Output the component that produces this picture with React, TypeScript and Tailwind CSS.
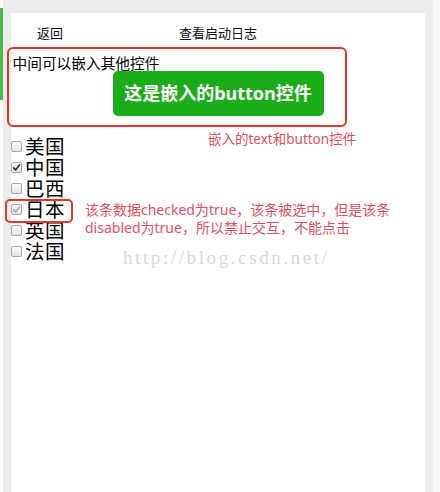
import React from "react";

const cjk = { fontFamily: '"Noto Sans", "Noto Sans CJK SC", sans-serif' };

function Box({ checked, disabled }: { checked?: boolean; disabled?: boolean }) {
  return (
    <span className="flex h-[11px] w-[11px] items-center justify-center rounded-[2px] border border-[#a8a8a8] bg-gradient-to-b from-[#fbfbfb] to-[#e4e4e4]">
      {checked && (
        <svg width="9" height="9" viewBox="0 0 9 9">
          <path
            d="M1.6 4.8 L3.6 6.9 L7.6 1.8"
            fill="none"
            stroke={disabled ? "#a9a9a9" : "#2e2e2e"}
            strokeWidth="1.7"
            strokeLinecap="round"
            strokeLinejoin="round"
          />
        </svg>
      )}
    </span>
  );
}

const items = [
  { name: "美国" },
  { name: "中国", checked: true },
  { name: "巴西" },
  { name: "日本", checked: true, disabled: true },
  { name: "英国" },
  { name: "法国" },
];

export default function App() {
  return (
    <div className="relative flex h-[492px] w-[440px] overflow-hidden bg-white" style={cjk}>
      <div className="w-[3px] bg-white">
        <div className="mt-[8px] h-[92px] w-[3px] bg-[#4cb848]" />
      </div>
      <div className="flex flex-1 bg-[#ececec] pl-[8px] pr-[8px] pt-[13px]">
        <div className="flex-1 bg-white">
          <div className="flex h-[42px] items-center text-[13px] text-[#111]">
            <span className="ml-[26px]">返回</span>
            <span className="ml-[116px]">查看启动日志</span>
          </div>
          <div className="pl-[1.5px] text-[14.7px] leading-[16px] text-black">中间可以嵌入其他控件</div>
          <div className="mx-auto flex h-[45px] w-[211px] items-center justify-center rounded-[5px] bg-[#1aad19] text-[18px] font-bold text-white">
            这是嵌入的button控件
          </div>
          <div className="mt-[20px] flex flex-col">
            {items.map((it) => (
              <div key={it.name} className="flex h-[21px] items-center gap-[3px]">
                <Box checked={it.checked} disabled={it.disabled} />
                <span className="text-[19.5px] leading-[21px] tracking-[0.5px] text-black">{it.name}</span>
              </div>
            ))}
          </div>
        </div>
      </div>
      <div className="w-[7px] bg-[#f8f8f8]" />

      {/* annotations */}
      <div className="absolute left-[7px] top-[47px] h-[80px] w-[340px] rounded-[6px] border-[2.5px] border-[#e2352e]" />
      <div className="absolute left-[208px] top-[130px] text-[13.5px] leading-[18px] text-[#e0505c]">
        嵌入的text和button控件
      </div>
      <div className="absolute left-[5px] top-[199px] h-[24px] w-[68px] rounded-[5px] border-[2.5px] border-[#e2352e]" />
      <div className="absolute left-[85px] top-[201px] w-[330px] text-[14px] leading-[18px] text-[#e0505c]">
        <div>该条数据checked为true，该条被选中，但是该条</div>
        <div>disabled为true，所以禁止交互，不能点击</div>
      </div>
      <div
        className="absolute left-[123px] top-[246px] text-[19px] leading-[24px] tracking-[2.6px] text-[#d8d8d8]"
        style={{ fontFamily: '"Liberation Serif", serif' }}
      >
        http://blog.csdn.net/
      </div>
    </div>
  );
}
